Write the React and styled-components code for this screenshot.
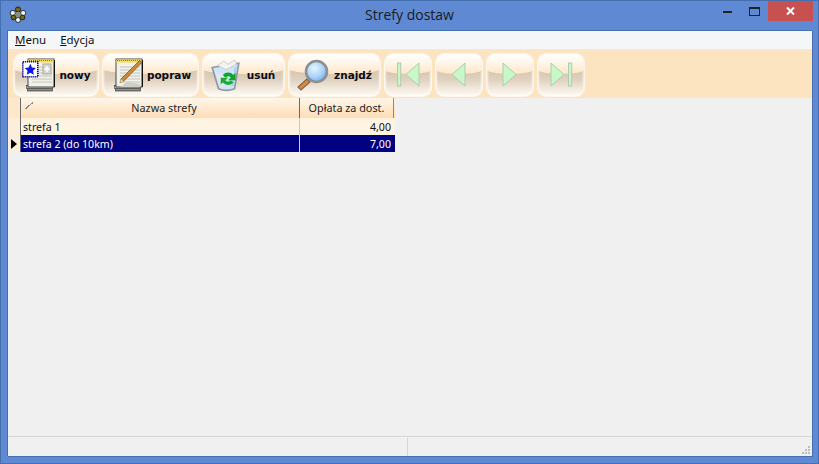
import React from 'react'
import styled, { createGlobalStyle } from 'styled-components'

const rows = [
    { name: 'strefa 1', fee: '4,00', selected: false },
    { name: 'strefa 2 (do 10km)', fee: '7,00', selected: true },
]

const App = () => {
    return (
        <>
            <GlobalStyle />
            <Window>
                <TitleBar>
                    <AppIcon />
                    <Title>Strefy dostaw</Title>
                    <WindowControls>
                        <ControlButton><MinimizeGlyph /></ControlButton>
                        <ControlButton><MaximizeGlyph /></ControlButton>
                        <CloseButton><CloseGlyph /></CloseButton>
                    </WindowControls>
                </TitleBar>
                <Client>
                    <MenuBar>
                        <MenuItem><u>M</u>enu</MenuItem>
                        <MenuItem><u>E</u>dycja</MenuItem>
                    </MenuBar>
                    <Toolbar>
                        <ToolButton $width={86}><NewIcon /><ToolLabel>nowy</ToolLabel></ToolButton>
                        <ToolButton $width={97}><EditIcon /><ToolLabel>popraw</ToolLabel></ToolButton>
                        <ToolButton $width={83}><BinIcon /><ToolLabel>usuń</ToolLabel></ToolButton>
                        <ToolButton $width={93}><SearchIcon /><ToolLabel>znajdź</ToolLabel></ToolButton>
                        <NavButton><NavIcon points="30,5 30,28 17,16.5" bar={8} /></NavButton>
                        <NavButton><NavIcon points="25,5 25,28 12,16.5" /></NavButton>
                        <NavButton><NavIcon points="12,5 12,28 25,16.5" /></NavButton>
                        <NavButton><NavIcon points="9,5 9,28 22,16.5" bar={26} /></NavButton>
                    </Toolbar>
                    <Content>
                        <Grid>
                            <HeaderRow>
                                <Indicator />
                                <NameHeader><SortMark />Nazwa strefy</NameHeader>
                                <FeeHeader>Opłata za dost.</FeeHeader>
                            </HeaderRow>
                            {rows.map((row) => (
                                <Row key={row.name} $selected={row.selected}>
                                    <Indicator>{row.selected ? <Pointer /> : null}</Indicator>
                                    <NameCell $selected={row.selected}>{row.name}</NameCell>
                                    <FeeCell $selected={row.selected}>{row.fee}</FeeCell>
                                </Row>
                            ))}
                        </Grid>
                    </Content>
                    <StatusBar>
                        <StatusPanel />
                        <StatusPanelLast><SizeGrip /></StatusPanelLast>
                    </StatusBar>
                </Client>
            </Window>
        </>
    )
}

export default App

const AppIcon = () => (
    <FlowerSvg width="18" height="17" viewBox="0 0 18 17">
        <circle cx="9" cy="3.5" r="2.6" fill="#6f6a10" stroke="#111" strokeWidth="0.8" />
        <circle cx="3.8" cy="7" r="2.6" fill="#f4f4ec" stroke="#111" strokeWidth="0.8" />
        <circle cx="14.2" cy="7" r="2.6" fill="#f4f4ec" stroke="#111" strokeWidth="0.8" />
        <circle cx="4.5" cy="11.5" r="2.4" fill="#6f6a10" stroke="#111" strokeWidth="0.8" />
        <circle cx="13.5" cy="11.5" r="2.4" fill="#6f6a10" stroke="#111" strokeWidth="0.8" />
        <circle cx="9" cy="14" r="2.4" fill="#fff" stroke="#111" strokeWidth="0.8" />
        <circle cx="9" cy="8.5" r="2.7" fill="#8d8d80" />
    </FlowerSvg>
)

const MinimizeGlyph = () => (
    <svg width="9" height="3" viewBox="0 0 9 3"><rect width="9" height="2" y="1" fill="#222" /></svg>
)

const MaximizeGlyph = () => (
    <svg width="11" height="9" viewBox="0 0 11 9">
        <rect x="0.5" y="0.5" width="10" height="8" fill="none" stroke="#222" />
        <rect width="11" height="2" fill="#222" />
    </svg>
)

const CloseGlyph = () => (
    <svg width="9" height="8" viewBox="0 0 9 8">
        <path d="M1 0.5 L8 7.5 M8 0.5 L1 7.5" stroke="#fff" strokeWidth="2" />
    </svg>
)

const Notebook = () => (
    <g>
        <rect x="2.5" y="30" width="25" height="3" fill="#8f8f88" stroke="#222" strokeWidth="0.6" />
        <rect x="1.5" y="27.5" width="26" height="3" fill="#c8c8c0" stroke="#333" strokeWidth="0.6" />
        <rect x="3" y="1" width="26" height="28" fill="#f1f1ea" stroke="#222" strokeWidth="0.8" />
        <rect x="3.5" y="1.5" width="25" height="3" fill="#f2de5a" />
        <path d="M4 2.5 H28" stroke="#8a7a20" strokeDasharray="1 1" />
        <path d="M29.6 2 V29" stroke="#111" strokeWidth="1.4" />
        <path d="M7 9 H27 M7 12 H27 M7 15 H27 M7 18 H27 M7 21 H27 M7 24 H27" stroke="#c4c4bc" />
    </g>
)

const NewIcon = () => (
    <IconSvg width="33" height="34" viewBox="0 0 33 34" $left={8}>
        <g transform="translate(3 0)"><Notebook /></g>
        <rect x="21" y="6" width="8" height="10" fill="#d8d8d0" stroke="#a8a8a0" />
        <path d="M25 8 V14 M22.5 11 H27.5" stroke="#fff" strokeWidth="1.4" />
        <rect x="0.8" y="3.8" width="15" height="15" fill="#fff" stroke="#0000b0" strokeWidth="1.6" strokeDasharray="1.2 0.8" />
        <path d="M8.3 5.8 L10 9.5 L14 10 L11 12.7 L11.9 16.7 L8.3 14.7 L4.7 16.7 L5.6 12.7 L2.6 10 L6.6 9.5 Z" fill="#0c18e8" />
    </IconSvg>
)

const EditIcon = () => (
    <IconSvg width="30" height="34" viewBox="0 0 30 34" $left={10}>
        <Notebook />
        <path d="M7 29 L27 29 L27 26 L14 24 Z" fill="#cfcfc6" />
        <path d="M8 21 L26.5 2.5 L28.8 4.6 L10.4 23.4 L7 24.5 Z" fill="#c98a3a" stroke="#6b4a1c" strokeWidth="0.7" />
        <path d="M8 21 L10.4 23.4 L7 24.5 Z" fill="#f0d8a8" />
    </IconSvg>
)

const BinIcon = () => (
    <IconSvg width="30" height="33" viewBox="0 0 28 31" $left={8}>
        <path d="M1 8 L26 4 L22 28 Q14 31 7 28 Z" fill="#cfe4f6" stroke="#8e9aa6" strokeWidth="1.6" />
        <path d="M6 6 L12 2 L16 5 L22 1 L24 5 L14 10 Z" fill="#f4f4f0" stroke="#b9c2c9" strokeWidth="0.7" />
        <path d="M4 12 L12 15 L13 26 L8 26 Z" fill="#e8e4f2" />
        <path d="M22 8 L24 7 L21 25 L19 26 Z" fill="#a8cdf0" />
        <path d="M11 15 A6.5 6.5 0 0 1 21 15 L23 13 L23 20 L16 20 L18.6 17.4 A3 3 0 0 0 13.6 17.6 Z" fill="#12a428" />
        <path d="M21 22 A6.5 6.5 0 0 1 11 22 L9 24 L9 17.5 L16 17.5 L13.4 20 A3 3 0 0 0 18.4 20 Z" fill="#16b030" />
    </IconSvg>
)

const SearchIcon = () => (
    <IconSvg width="33" height="32" viewBox="0 0 33 32" $left={7}>
        <path d="M11 20 L2 28 L5 31 L14 23 Z" fill="#e8872a" stroke="#6c6c6c" strokeWidth="1.2" />
        <defs>
            <radialGradient id="lens" cx="0.4" cy="0.35" r="0.7">
                <stop offset="0" stopColor="#e6f5ff" />
                <stop offset="0.6" stopColor="#a8d4f8" />
                <stop offset="1" stopColor="#6fa8e0" />
            </radialGradient>
        </defs>
        <circle cx="20.5" cy="12.5" r="10.5" fill="url(#lens)" stroke="#8d8f95" strokeWidth="2.6" />
    </IconSvg>
)

const NavIcon = ({ points, bar }) => (
    <NavSvg width="38" height="34" viewBox="0 0 38 34">
        {bar !== undefined ? <rect x={bar + 0.5} y="5" width="3.2" height="23" fill="#c8f8c8" stroke="#b4c8b4" /> : null}
        <polygon points={points} fill="#c8f8c8" stroke="#b0ccb0" />
    </NavSvg>
)

const GlobalStyle = createGlobalStyle`
    html, body {
        margin: 0;
        padding: 0;
        width: 819px;
        height: 464px;
        overflow: hidden;
    }
    body {
        font-family: "DejaVu Sans", Verdana, sans-serif;
    }
`

const Window = styled.div`
    width: 819px;
    height: 464px;
    box-sizing: border-box;
    display: flex;
    flex-direction: column;
    background: #5f8ad3;
    border: 1px solid #4470b0;
    padding: 0 6px 7px;
`

const TitleBar = styled.div`
    position: relative;
    height: 29px;
    flex: none;
    display: flex;
    align-items: center;
    justify-content: center;
`

const FlowerSvg = styled.svg`
    position: absolute;
    left: 2px;
    top: 5px;
`

const Title = styled.div`
    font-family: "Open Sans", "Noto Sans", sans-serif;
    font-size: 14px;
    color: #1a1a1a;
    margin-top: -2px;
`

const WindowControls = styled.div`
    position: absolute;
    right: -1px;
    top: 0;
    display: flex;
`

const ControlButton = styled.div`
    width: 27px;
    height: 20px;
    display: flex;
    align-items: center;
    justify-content: center;
`

const CloseButton = styled(ControlButton)`
    width: 45px;
    background: #c75050;
`

const Client = styled.div`
    flex: 1;
    min-height: 0;
    display: flex;
    flex-direction: column;
    background: #f0f0f0;
    border: 1px solid #4470b0;
    border-width: 1px 0 0 1px;
    box-shadow: 1px 1px 0 #4470b0;
`

const MenuBar = styled.div`
    height: 19px;
    box-sizing: border-box;
    padding-bottom: 1px;
    flex: none;
    display: flex;
    align-items: center;
    padding-left: 7px;
    gap: 14px;
    background: #f5f6f7;
    border-bottom: 1px solid #e8e9ea;
`

const MenuItem = styled.span`
    font-family: "Noto Sans", "Open Sans", sans-serif;
    font-size: 11.5px;
    color: #111;
`

const Toolbar = styled.div`
    height: 48px;
    flex: none;
    box-sizing: border-box;
    display: flex;
    gap: 3px;
    padding: 3px 0 1px 5px;
    background: #fde4c0;
`

const ToolButton = styled.div`
    position: relative;
    overflow: hidden;
    width: ${(props) => props.$width}px;
    height: 44px;
    flex: none;
    box-sizing: border-box;
    display: flex;
    align-items: center;
    border-radius: 9px;
    border: 1px solid #fff6ea;
    box-shadow: inset 0 0 2px 1px rgba(255, 255, 255, 0.75);
    background: linear-gradient(180deg, #d8c7b0 40%, #e0d2c0 62%, #f4ece0 85%, #fffaf3 100%);

    &::before {
        content: "";
        position: absolute;
        left: -3px;
        right: -3px;
        top: -1px;
        height: 21px;
        background: linear-gradient(180deg, #ffffff 0%, #fff8ee 40%, #fde6c6 100%);
        border-radius: 0 0 50% 50% / 0 0 6px 6px;
    }
`

const NavButton = styled(ToolButton)`
    width: 48px;
    justify-content: center;
`

const IconSvg = styled.svg`
    position: relative;
    flex: none;
    margin-left: ${(props) => props.$left}px;
`

const NavSvg = styled.svg`
    position: relative;
`

const ToolLabel = styled.span`
    position: relative;
    flex: 1;
    text-align: center;
    padding-right: 3px;
    font-family: "DejaVu Sans", Verdana, sans-serif;
    font-weight: 700;
    font-size: 10.5px;
    color: #0a0a14;
`

const Content = styled.div`
    flex: 1;
    min-height: 0;
`

const Grid = styled.div`
    width: 387px;
`

const HeaderRow = styled.div`
    display: grid;
    grid-template-columns: 12px 279px 95px;
    height: 20px;
    background: linear-gradient(180deg, #fff6ea 0%, #fdddb4 100%);
`

const Row = styled.div`
    display: grid;
    grid-template-columns: 12px 279px 95px;
    height: 17px;
    background: ${(props) => (props.$selected ? '#000080' : '#fff3e2')};
`

const Indicator = styled.div`
    display: flex;
    align-items: center;
    padding-left: 3px;
    background: #f0f0f0;
    ${HeaderRow} & {
        background: #fde8cc;
    }
    ${Row} & {
        background: #fdeedb;
    }
`

const Pointer = styled.div`
    width: 0;
    height: 0;
    border-top: 5px solid transparent;
    border-bottom: 5px solid transparent;
    border-left: 6px solid #000;
`

const HeaderCell = styled.div`
    position: relative;
    font-family: "Noto Sans", "Open Sans", sans-serif;
    font-size: 10.8px;
    line-height: 20px;
    color: #222;
    text-align: center;
    border-left: 1px solid #6a6a6a;
`

const NameHeader = styled(HeaderCell)`
    padding-left: 8px;
`

const FeeHeader = styled(HeaderCell)`
    border-right: 1px solid #8a8a8a;
`

const SortMark = styled.span`
    position: absolute;
    left: 4px;
    top: 4px;
    width: 8px;
    height: 7px;
    border-bottom: 1px solid #efe4d4;
    background: linear-gradient(to bottom right, transparent 46%, #8a8a8a 46%, #8a8a8a 58%, transparent 58%);
`

const Cell = styled.div`
    box-sizing: border-box;
    height: 17px;
    font-family: "Noto Sans", "Open Sans", sans-serif;
    font-size: 10.6px;
    line-height: 17px;
    padding: 1px 2px 0;
    color: ${(props) => (props.$selected ? '#fff' : '#111')};
    white-space: nowrap;
`

const NameCell = styled(Cell)`
    border-left: 1px solid #6a6a6a;
`

const FeeCell = styled(Cell)`
    text-align: right;
    padding-right: 3px;
    border-left: 1px solid ${(props) => (props.$selected ? '#d0d0d0' : '#c8c8c8')};
`

const StatusBar = styled.div`
    height: 18px;
    flex: none;
    display: flex;
    border-top: 1px solid #d7d7d7;
    background: #f0f0f0;
    padding-top: 1px;
`

const StatusPanel = styled.div`
    width: 399px;
    flex: none;
    border-right: 1px solid #d7d7d7;
`

const StatusPanelLast = styled.div`
    position: relative;
    flex: 1;
`

const SizeGrip = styled.div`
    position: absolute;
    right: 2px;
    bottom: 2px;
    width: 8px;
    height: 8px;
    background:
        linear-gradient(#bdbdbd, #bdbdbd) 6px 0 / 2px 2px no-repeat,
        linear-gradient(#bdbdbd, #bdbdbd) 3px 3px / 2px 2px no-repeat,
        linear-gradient(#bdbdbd, #bdbdbd) 6px 3px / 2px 2px no-repeat,
        linear-gradient(#bdbdbd, #bdbdbd) 0 6px / 2px 2px no-repeat,
        linear-gradient(#bdbdbd, #bdbdbd) 3px 6px / 2px 2px no-repeat,
        linear-gradient(#bdbdbd, #bdbdbd) 6px 6px / 2px 2px no-repeat;
`
